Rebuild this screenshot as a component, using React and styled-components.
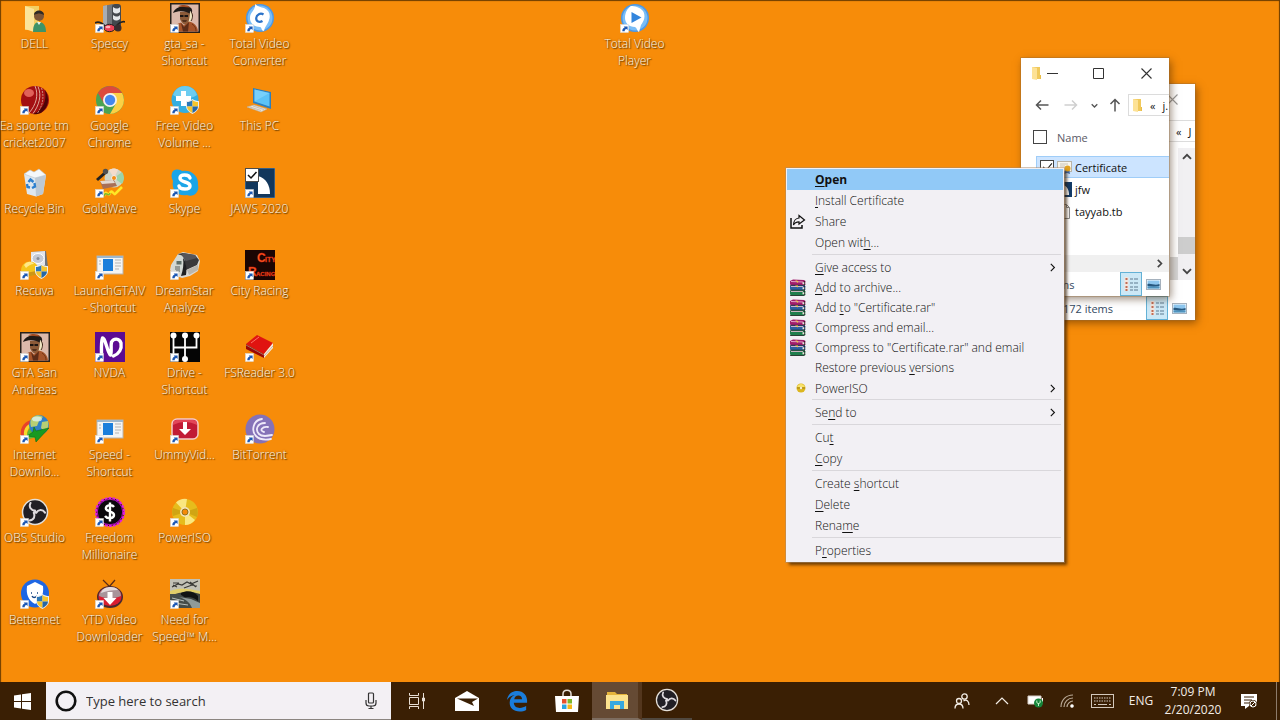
import React from 'react';
import styled, { createGlobalStyle } from 'styled-components';

const GlobalStyle = createGlobalStyle`
  *, *::before, *::after { box-sizing: border-box; }
  body {
    margin: 0;
    font-family: "Open Sans", "Noto Sans", "Liberation Sans", sans-serif;
    font-size: 12px;
    color: #111;
  }
  button, input { font: inherit; color: inherit; }
  button { border: 0; background: none; padding: 0; }
  ul { list-style: none; margin: 0; padding: 0; }
  svg { display: block; flex: none; }
`;

/* ---------- layout ---------- */

const Screen = styled.div`
  display: flex;
  flex-direction: column;
  min-height: 100vh;
  background: #f78c09;
`;

const Desktop = styled.main`
  position: relative;
  flex: 1;
  display: flex;
  padding-bottom: 24px;
  overflow: hidden;
  box-shadow: inset 2px 2px 1px -1px #6b3b00, inset -2px 0 1px -1px #6b3b00;
`;

const IconGrid = styled.div`
  display: grid;
  grid-auto-flow: column;
  grid-template-rows: repeat(8, 1fr);
  grid-auto-columns: 75px;
  padding-left: ${(p) => p.$indent || 0}px;
  margin-left: -3px;
`;

const Shortcut = styled.button`
  display: flex;
  flex-direction: column;
  align-items: center;
  justify-content: flex-start;
  gap: 2px;
  padding-top: 3px;
`;

const ShortcutLabel = styled.span`
  width: 78px;
  margin: 0 -2px;
  font-size: 12px;
  font-weight: 300;
  line-height: 17px;
  color: #fff8e8;
  text-align: center;
  white-space: pre-line;
  text-shadow: 1px 1px 1px #5c3500, 0 0 2px #8f5200;
`;

/* ---------- icon building blocks ---------- */

function Tile({ children, link = true, label }) {
  return (
    <svg width="30" height="30" viewBox="0 0 30 30" role="img" aria-label={label}>
      {children}
      {link && (
        <g>
          <rect x="0.5" y="21.5" width="8" height="8" fill="#fff" stroke="#d9d9d9" strokeWidth="0.5" />
          <path d="M2.3 28.3c0-2.2.9-3.4 2.4-3.7l-1-1.2h3.9v3.7l-1.1-1.1c-1.4.3-1.8 1.1-1.8 2.3z" fill="#1c58b4" />
        </g>
      )}
    </svg>
  );
}

function Shield({ x = 16, y = 14 }) {
  return (
    <g transform={`translate(${x} ${y})`}>
      <path d="M6.5 0C8.5 1.6 11 2 13 2v5c0 3.600-3 6-6.500 8C3 13 0 10.600 0 7V2c2 0 4.500-.4 6.500-2z" fill="#e9eef2" />
      <path d="M6.500 1v6.500H1V3c2 0 4-.6 5.500-2z" fill="#2c78b8" />
      <path d="M6.500 1v6.500H12V3c-2 0-4-.6-5.500-2z" fill="#f5c52c" />
      <path d="M1 7.500h5.500V14C3.500 12.400 1 10.500 1 7.500z" fill="#f5c52c" />
      <path d="M12 7.500H6.500V14C9.500 12.400 12 10.500 12 7.500z" fill="#2666a4" />
    </g>
  );
}

function ObsMark({ r = 13, cx = 15, cy = 15 }) {
  const s = r / 13;
  return (
    <g transform={`translate(${cx} ${cy}) scale(${s})`}>
      <circle r="12.500" fill="#211f25" stroke="#e4dfd8" strokeWidth="1.500" />
      {[0, 120, 240].map((a) => (
        <path key={a} d="M-4.500 -9C-6.500 -5 -4 -1.500 0 -1.500" transform={`rotate(${a})`} fill="none" stroke="#dedade" strokeWidth="2" strokeLinecap="round" />
      ))}
      <circle r="1.800" fill="#dedade" />
    </g>
  );
}

const art = {
  user: (
    <>
      <path d="M5 3h14v24H5z" fill="#f3cf63" />
      <path d="M5 3l9 3v23l-9-3z" fill="#fbe49a" />
      <circle cx="19" cy="13" r="5" fill="#7d5537" />
      <path d="M14 12c0-6 10-6 10 0-3-2-6-2-10 0z" fill="#2f2a26" />
      <path d="M13 29c0-8 3-10 6-10s7 2 7 10z" fill="#3e9468" />
      <path d="M17 19l2 3 2-3z" fill="#e9f4ec" />
    </>
  ),
  speccy: (
    <>
      <path d="M8 3l10-2v24l-10 1z" fill="#72767b" />
      <path d="M8 3l4-1v24l-4-1z" fill="#a9adb2" />
      <rect x="17" y="1" width="9" height="26" rx="3" fill="#44484d" />
      <path d="M18 4c3 2 5 2 7 0v5c-3 2-5 2-7 0zM18 12c3 2 5 2 7 0v4c-3 2-5 2-7 0z" fill="#e4e7ea" />
      <path d="M0 20c3-2 6-1 10 3M30 19c-3-1-5 0-8 3" stroke="#222" strokeWidth="1.700" fill="none" />
      <ellipse cx="14.500" cy="25" rx="5.500" ry="3.700" fill="#ee4257" stroke="#1e1e1e" />
      <ellipse cx="13" cy="24" rx="2.500" ry="1.200" fill="#ffb1b8" />
      <ellipse cx="23" cy="25" rx="3.500" ry="3.500" fill="#3a2c2e" />
    </>
  ),
  gta: (
    <>
      <rect width="30" height="30" fill="#28201a" />
      <rect x="1.500" y="1.500" width="27" height="27" fill="#dcb9ab" />
      <path d="M10 9h10v8c-1 4-2 5-4 5s-5-3-6-6z" fill="#8b5a38" />
      <path d="M3 10C5 3 18 1 21 5c2 2 1 5 0 6-5-3-12-4-18-1z" fill="#211a17" />
      <path d="M8 3.500c4-2 10-2 12 1-4 0-8-1-12-1z" fill="#a34a20" />
      <path d="M10 12h3.500v2H10zM14.500 12H18v2h-3.500z" fill="#1c1512" />
      <path d="M20 8c3 2 3 6 2 9l-4 4c1-4 2-8 2-13z" fill="#efe5c2" />
      <path d="M21 9c2 2 2 6 0 9" stroke="#3b2417" fill="none" />
      <path d="M2 28.500c1-6 6-8 9-9l3 3 5-4c5 1 9 5 9 10z" fill="#a6542a" />
      <path d="M11 20l3 4 5-5-1 9.500h-5z" fill="#5c2c17" />
      <path d="M12 17h5l-1 2h-3z" fill="#54301c" />
      <path d="M22 21c3 2 4 4 4 7.500M6 22c2 2 2 4 2 6" stroke="#763515" fill="none" />
    </>
  ),
  converter: (
    <>
      <circle cx="15" cy="15" r="14" fill="#4b98e6" />
      <circle cx="15" cy="15" r="12.500" fill="#79bdf7" />
      <path d="M10 1c3 3 6 3 9 4 5 2 7 7 5 12-1 4-4 6-5 11-3 0-2-4-4-4-6 0-10-4-10-9 0-6 6-8 5-14z" fill="#fff" />
      <path d="M18.500 11.500c-3-2-7 0-7.300 3.500-.2 3.500 3 5 6.300 3" stroke="#2b72c8" strokeWidth="2.200" fill="none" />
    </>
  ),
  player: (
    <>
      <circle cx="15" cy="15" r="14" fill="#4b98e6" />
      <circle cx="15" cy="15" r="12.500" fill="#79bdf7" />
      <path d="M11 3c3 0 9 1 12 5 3 5 1 10-2 14l-2 7c-2-1-2-4-4-5-6 0-10-4-10-9 0-6 3-10 6-12z" fill="#fff" />
      <path d="M11.500 9l10 5.500-10 5.500z" fill="#3285dd" />
    </>
  ),
  cricket: (
    <>
      <circle cx="15" cy="15" r="14" fill="#a30f12" />
      <ellipse cx="9" cy="8" rx="5" ry="4" fill="#e0625a" />
      <path d="M25 5c5 8 4 17-4 23-5 2-8 1-8 1 10-4 14-13 12-24z" fill="#4c0507" />
      <path d="M15 1c4 9 1 19-6 27M18 1.500c4 9 1 19-5 27" stroke="#e0a99b" strokeWidth="1" fill="none" />
      <path d="M21.500 3c3 9 1 18-4 25" stroke="#c98d80" strokeWidth="1" fill="none" strokeDasharray="2 1" />
    </>
  ),
  chrome: (
    <>
      <circle cx="15" cy="15" r="14" fill="#4aa453" />
      <path d="M15 15L2.900 8A14 14 0 0 1 27.100 8z" fill="#dc4a3d" />
      <path d="M15 8h12.100A14 14 0 0 1 15 29l6-10.500z" fill="#fbd045" />
      <path d="M2.900 8L9 18.500 15 8z" fill="#dc4a3d" />
      <circle cx="15" cy="15" r="7" fill="#f4f1ee" />
      <circle cx="15" cy="15" r="5.200" fill="#4488ee" />
    </>
  ),
  volume: (
    <>
      <circle cx="15" cy="14.500" r="13.500" fill="#35aee0" />
      <path d="M3 10c4-12 20-12 24 0-8 5-16 5-24 0z" fill="#6cccf0" />
      <path d="M11 6h5v5h5v5h-5v5h-5v-5H6v-5h5z" fill="#fff" />
      <Shield x={16} y={14} />
    </>
  ),
  pc: (
    <>
      <path d="M8 3l18 4v17L8 18z" fill="#2d7fbd" />
      <path d="M9.500 4.500l15 3.500v13.500l-15-5z" fill="#5cc3f7" />
      <path d="M9.500 4.500l15 3.500-15 8.500z" fill="#8ad8fc" opacity=".6" />
      <path d="M2 22l7-2 13 4-6 3z" fill="#e8e3da" stroke="#b7b0a3" strokeWidth=".6" />
      <path d="M5 22l11 3.500M8 21l11 3.500" stroke="#b7b0a3" strokeWidth=".7" />
    </>
  ),
  bin: (
    <>
      <path d="M4 6l22 1-3 19-7 2.500L7 26z" fill="#dfe7ee" />
      <path d="M15 8l11-1-3 19-7 2.500z" fill="#bdc9d4" />
      <path d="M4 6l6-4 4 2 5-3 7 6-11 3z" fill="#f5f8fa" stroke="#b9c4ce" strokeWidth=".6" />
      <path d="M8.500 14l2-2.500 3 2.500M14.500 15l.5 3.500-3 1.500M10 19.500l-2.500-.5-.5-3" fill="none" stroke="#2c80cf" strokeWidth="2.400" />
    </>
  ),
  goldwave: (
    <>
      <circle cx="19" cy="10" r="9.500" fill="#cfd6c8" />
      <path d="M19 10L27 4c3 4 2 9 0 12z" fill="#9bd3a9" />
      <path d="M19 10L14 2c3-2 7-2 9 0z" fill="#f3dccb" />
      <circle cx="19" cy="10" r="2.500" fill="#f58d14" stroke="#eee" />
      <path d="M1 11l9-8 2 2-9 8z" fill="#222" />
      <circle cx="10.500" cy="3.500" r="2.700" fill="#51514f" />
      <path d="M5 13l14-1 3 6-14 3z" fill="#a86f57" />
      <path d="M5 13l13-1 2 3-13 1z" fill="#e4d9d1" />
      <path d="M9 28c2-8 4 2 6-3s4 4 6 0l6-6" stroke="#ffe626" strokeWidth="2.600" fill="none" />
      <path d="M9 28c2-6 4 2 6-3" stroke="#79b830" strokeWidth="1.500" fill="none" />
    </>
  ),
  skype: (
    <>
      <path d="M3 3c4-3 8-1 9 0 9-2 17 5 16 14 2 7-5 13-11 10C8 29 1 22 3 13c-2-4-2-7 0-10z" fill="#1ba5e8" />
      <path d="M20 10c-1-4-10-4-10 0 0 5 10 3 10 8 0 4-10 4-11 0" fill="none" stroke="#fff" strokeWidth="3.400" strokeLinecap="round" />
    </>
  ),
  jaws: (
    <>
      <rect width="30" height="30" fill="#12375c" stroke="#5d86aa" />
      <path d="M13 8c8 2 12 9 12 18H13z" fill="#fff" />
      <rect x=".5" y=".5" width="13" height="13" fill="#fff" stroke="#4b4b4b" />
      <path d="M3 7l3 3 5.500-6" fill="none" stroke="#111" strokeWidth="1.500" />
    </>
  ),
  recuva: (
    <>
      <path d="M11 2l15-1 2 16-16 3z" fill="#6f747c" />
      <path d="M11 2l14-1v14l-14 4z" fill="#e1e4ec" />
      <ellipse cx="18" cy="8.500" rx="6" ry="5" fill="#c5cad6" stroke="#fff" />
      <circle cx="18" cy="8.500" r="1.500" fill="#888d98" />
      <path d="M1 21c0-9 9-12 15-7 3 3 3 6 3 9L8 27H2z" fill="#f5c51c" />
      <path d="M4 15c3-4 8-4 10-1-3 0-6 2-8 4z" fill="#ffe887" />
      <path d="M3 23c6 0 10-2 16-2v3l-12 3z" fill="#cd9614" />
      <Shield x={15} y={14} />
    </>
  ),
  app: (
    <>
      <rect x="2" y="6" width="26" height="18" fill="#f4f4f3" stroke="#b8b4ae" />
      <rect x="2" y="6" width="26" height="2" fill="#9eb7cc" />
      <rect x="8" y="9" width="10" height="12" fill="#1b7edb" />
      <path d="M20 10h6M20 13h6M20 16h6M20 19h4M4 11h2M4 14h2" stroke="#b3b3b3" />
    </>
  ),
  dreamstar: (
    <>
      <path d="M1 15L8 4l5-2 14 3 3 6-2 10-8 5-8 2-8-3-4-5z" fill="#dcdad4" />
      <path d="M8 4l5-1 12 2 4 5-2 5-11 5-4-12z" fill="#3a393a" />
      <path d="M13 3l12 2 2 3-11 3-5-5z" fill="#56565a" />
      <path d="M2 14L8 5c4-1 6 3 7 7l1 11-5 2-8-5z" fill="#d4d9d3" />
      <path d="M13 8c3 4 4 10 3 17l-5 1c2-6 3-12 2-18z" fill="#1f2022" />
      <rect x="6.500" y="11" width="5" height="3.500" fill="#5f6f68" />
      <path d="M5 17h5M5 19h5M6 21h4" stroke="#565d5a" />
      <path d="M17 20l11-5v5l-9 5z" fill="#b9b6ae" />
    </>
  ),
  city: (
    <>
      <rect width="30" height="30" fill="#1b0503" />
      <g fill="#ff5a24" stroke="#c81707" strokeWidth=".3" fontFamily="Liberation Sans" fontWeight="700">
        <text x="12" y="12" fontSize="12">C</text>
        <text x="20" y="12" fontSize="7">ITY</text>
        <text x="3" y="26" fontSize="12">R</text>
        <text x="11" y="26" fontSize="6">ACING</text>
      </g>
    </>
  ),
  nvda: (
    <>
      <rect width="30" height="30" fill="#5c0b93" />
      <path d="M6.500 23C6.500 17 6 10 7.500 6c3 0 5 15 8 17 1.500-3 0-9 1-13 2-4 8-4 9.500 1 1 6-2 11-7.500 13" fill="none" stroke="#fff" strokeWidth="3.400" strokeLinecap="round" strokeLinejoin="round" />
    </>
  ),
  drive: (
    <>
      <rect width="30" height="30" fill="#050505" />
      <path d="M3.500 4v12M15 4v22M26.500 4v11.500H3.500V22" fill="none" stroke="#fff" strokeWidth="1.800" />
      <g fill="#fff"><circle cx="3.500" cy="3.500" r="3" /><circle cx="15" cy="3.500" r="3" /><circle cx="26.500" cy="3.500" r="3" /><circle cx="15" cy="27" r="3" /></g>
    </>
  ),
  book: (
    <>
      <path d="M1 12L12 3l16 8-9 11z" fill="#e01310" />
      <path d="M1 12l18 10v4L1 17z" fill="#9a0705" />
      <path d="M19 22l9-11v5l-9 10z" fill="#f5ebdf" />
      <path d="M19 24l9-10M1 13l18 10" stroke="#b19a8b" strokeWidth=".7" />
      <path d="M6 11l8-6" stroke="#ff7267" />
    </>
  ),
  idm: (
    <>
      <path d="M1 22C-1 11 8 5 17 5l-3 5C7 10 4 14 4 22z" fill="#e8412b" />
      <path d="M4 22C3 14 8 9 14 9v3c-6 0-7 5-7 10z" fill="#f7d929" />
      <path d="M7 22c0-6 3-9 8-9l2 10-8 2z" fill="#5dbb35" />
      <circle cx="19" cy="11" r="10" fill="#2f7fc6" />
      <path d="M12 4c4-4 8-3 11-1l-4 4-2 5-6 1c-1-4-1-7 1-9zM22 8l6-1c1 4 0 8-3 11l-4-4z" fill="#b6cf74" />
      <ellipse cx="17" cy="5" rx="5" ry="2.500" fill="#e5f6ff" opacity=".7" />
      <path d="M14 13l2 4 13-3-13 14-1-5-8-1 6-4z" fill="#189a21" stroke="#0c6e13" strokeWidth=".6" />
    </>
  ),
  ummy: (
    <>
      <rect x="2" y="5" width="26" height="20" rx="5" fill="#c11b35" stroke="#f5cbc8" strokeWidth="1.500" />
      <path d="M3 11c8-4 16-4 24 0V9c0-2-2-3-4-3H7C5 6 3 7 3 9z" fill="#e24758" />
      <path d="M13 8h4v7h4l-6 6-6-6h4z" fill="#fff" />
    </>
  ),
  bittorrent: (
    <>
      <circle cx="15" cy="15" r="14.500" fill="#8572b8" />
      <path d="M17 5C8 6 6 17 11 22c4 4 10 4 15 3M20 9c-8 0-10 7-6 11 3 3 8 2 13 1M23 13c-6-1-9 4-4 5" fill="none" stroke="#eee9fa" strokeWidth="1.800" strokeLinecap="round" />
    </>
  ),
  obs: <ObsMark />,
  freedom: (
    <>
      <circle cx="15" cy="15" r="14" fill="#0c080c" stroke="#df1de2" strokeWidth="2" strokeDasharray="3 1" />
      <circle cx="15" cy="15" r="12.700" fill="none" stroke="#b313ba" />
      <path d="M19 10c-2-3-9-2-8 2 1 3 8 2 8 6 0 4-7 4-9 1M15 5.500v19" fill="none" stroke="#fff" strokeWidth="2.400" />
    </>
  ),
  disc: (
    <>
      <circle cx="15" cy="15" r="13" fill="#e6bc1c" />
      <path d="M15 15L6 5.500A13 13 0 0 1 17 2zM15 15l10 8a13 13 0 0 1-10 5z" fill="#fff19a" opacity=".8" />
      <path d="M15 15l12-4c1 3 1 6 0 9zM15 15L3 19c-1-3-1-6 0-8z" fill="#b98e0a" opacity=".5" />
      <circle cx="15" cy="15" r="5" fill="#f3e2b5" />
      <circle cx="15" cy="15" r="3" fill="#f58a08" stroke="#93711b" />
    </>
  ),
  betternet: (
    <>
      <circle cx="15" cy="14.500" r="14" fill="#1d66e4" />
      <path d="M7 7l8-4 8 4c1 9-2 14-8 18C8 21 6 15 7 7z" fill="#fff" />
      <path d="M11 14h1M17 14h1M12 17c1 2 3 2 5 0" stroke="#164484" strokeWidth="1.300" fill="none" />
      <Shield x={16} y={15} />
    </>
  ),
  ytd: (
    <>
      <path d="M8 1l7 7M20 1l-6 7" stroke="#5b2b18" strokeWidth="1.200" />
      <ellipse cx="15" cy="18" rx="13" ry="11" fill="#4a2a30" />
      <ellipse cx="15" cy="17.500" rx="11.500" ry="9.500" fill="#d91d31" />
      <path d="M4 17c0-11 22-13 22 0-7 3-15 3-22 0z" fill="#a8949a" />
      <path d="M6 14c1-7 14-8 17-3-6 0-12 1-17 3z" fill="#e3d9dc" />
      <path d="M12.500 13h5v6h4L15 26l-6.500-7h4z" fill="#fff" />
    </>
  ),
  nfs: (
    <>
      <rect width="30" height="29" fill="#3d433f" />
      <rect width="30" height="12" fill="#c2c1b5" />
      <path d="M2 8l6-3 4 1 5-3 4 2 7-3M3 4h6M14 9l8-3 5 1M3 6l4 2M20 3l6 5" stroke="#393935" strokeWidth="1.200" fill="none" />
      <path d="M0 12c10-4 20-2 30 0v3c-8-3-20-3-30 2z" fill="#e0ce69" />
      <path d="M11 14c6-3 13-2 17 3v5c-5-5-13-5-17-2z" fill="#111413" />
      <path d="M0 15l9 0c4 2 8 4 11 9l3 5H0z" fill="#454d49" />
      <path d="M9 18c6 2 11 5 13 11h8v-5l-9-4z" fill="#8f9b99" />
      <path d="M2 19l12 3M4 24l14 2" stroke="#b9c1bc" strokeWidth="1" />
    </>
  ),
};

const shortcuts = [
  { icon: 'user', text: 'DELL', plain: true },
  { icon: 'cricket', text: 'Ea sporte tm\ncricket2007' },
  { icon: 'bin', text: 'Recycle Bin', plain: true },
  { icon: 'recuva', text: 'Recuva' },
  { icon: 'gta', text: 'GTA San\nAndreas' },
  { icon: 'idm', text: 'Internet\nDownlo...' },
  { icon: 'obs', text: 'OBS Studio' },
  { icon: 'betternet', text: 'Betternet' },
  { icon: 'speccy', text: 'Speccy' },
  { icon: 'chrome', text: 'Google\nChrome' },
  { icon: 'goldwave', text: 'GoldWave' },
  { icon: 'app', text: 'LaunchGTAIV\n- Shortcut' },
  { icon: 'nvda', text: 'NVDA' },
  { icon: 'app', text: 'Speed -\nShortcut' },
  { icon: 'freedom', text: 'Freedom\nMillionaire' },
  { icon: 'ytd', text: 'YTD Video\nDownloader' },
  { icon: 'gta', text: 'gta_sa -\nShortcut' },
  { icon: 'volume', text: 'Free Video\nVolume ...' },
  { icon: 'skype', text: 'Skype' },
  { icon: 'dreamstar', text: 'DreamStar\nAnalyze' },
  { icon: 'drive', text: 'Drive -\nShortcut' },
  { icon: 'ummy', text: 'UmmyVid...' },
  { icon: 'disc', text: 'PowerISO' },
  { icon: 'nfs', text: 'Need for\nSpeed™ M...' },
  { icon: 'converter', text: 'Total Video\nConverter' },
  { icon: 'pc', text: 'This PC', plain: true },
  { icon: 'jaws', text: 'JAWS 2020' },
  { icon: 'city', text: 'City Racing' },
  { icon: 'book', text: 'FSReader 3.0' },
  { icon: 'bittorrent', text: 'BitTorrent' },
];

function DesktopShortcut({ icon, text, plain }) {
  return (
    <Shortcut type="button">
      <Tile link={!plain}>{art[icon]}</Tile>
      <ShortcutLabel>{text}</ShortcutLabel>
    </Shortcut>
  );
}

/* ---------- explorer windows ---------- */

const Window = styled.section`
  position: absolute;
  left: ${(p) => p.$x}px;
  top: ${(p) => p.$y}px;
  width: 148px;
  background: #fff;
  font-size: 11px;
  overflow: hidden;
  box-shadow: 0 0 0 1px rgba(150, 110, 60, 0.35), 2px 3px 8px rgba(60, 30, 0, 0.5);
`;

const TitleBar = styled.header`
  display: flex;
  align-items: center;
  height: 30px;
  padding-left: 10px;
`;

const CaptionButton = styled.button`
  display: flex;
  align-items: center;
  justify-content: center;
  flex: none;
  width: ${(p) => p.$w}px;
  height: 30px;
  color: ${(p) => (p.$dim ? '#999' : '#333')};
`;

const NavBar = styled.nav`
  display: flex;
  align-items: center;
  height: 34px;
  padding-left: 8px;
`;

const NavButton = styled.button`
  display: flex;
  align-items: center;
  justify-content: center;
  flex: none;
  width: ${(p) => p.$w}px;
  height: 22px;
  color: ${(p) => (p.$dim ? '#cfcfcf' : '#555')};
`;

const Address = styled.div`
  display: flex;
  align-items: center;
  gap: 7px;
  flex: none;
  width: 70px;
  height: 22px;
  padding-left: 3px;
  border: 1px solid #dcdcdc;
`;

const Body = styled.div`
  display: flex;
  flex-direction: ${(p) => (p.$row ? 'row' : 'column')};
  justify-content: ${(p) => (p.$row ? 'flex-end' : 'flex-start')};
  min-height: ${(p) => p.$h}px;
`;

const ColumnHead = styled.div`
  display: flex;
  align-items: center;
  gap: 10px;
  height: 30px;
  margin-bottom: 4px;
  padding-left: 12px;
  color: #5a5a66;
`;

const Check = styled.input`
  appearance: none;
  display: flex;
  justify-content: center;
  flex: none;
  width: 14px;
  height: 14px;
  margin: 0;
  border: 1px solid #444;
  background: #fff;

  &:checked::after {
    content: '';
    width: 5px;
    height: 9px;
    border: solid #111;
    border-width: 0 1px 1px 0;
    transform: rotate(40deg);
  }
`;

const FileRow = styled.li`
  display: flex;
  align-items: center;
  gap: 3px;
  height: 22px;
  margin-left: 15px;
  padding-left: 3px;
  background: ${(p) => (p.$selected ? '#cce4ff' : 'transparent')};
  border: 1px solid ${(p) => (p.$selected ? '#9fcdf8' : 'transparent')};
  border-right: 0;
`;

const RowCheck = styled(Check)`
  visibility: ${(p) => (p.$show ? 'visible' : 'hidden')};
`;

const HScroll = styled.div`
  display: flex;
  align-items: center;
  justify-content: flex-end;
  height: 17px;
  margin-top: auto;
  padding-right: 5px;
  background: #f0f0f0;
  color: #444;
`;

const VScroll = styled.div`
  display: flex;
  flex-direction: column;
  justify-content: space-between;
  align-items: center;
  width: 17px;
  height: 132px;
  padding: 4px 0;
  background: #f1f0f2;
  color: #444;
`;

const VThumb = styled.div`
  width: 17px;
  height: 17px;
  margin: auto 0 12px;
  background: #cdcdcd;
`;

const PaneEdge = styled.div`
  align-self: flex-start;
  width: 8px;
  height: 23px;
  margin-top: 109px;
  background: #d6d6d6;
`;

const StatusBar = styled.footer`
  display: flex;
  align-items: center;
  height: 24px;
  padding: 0 5px 0 16px;
  color: #33495f;
`;

const ViewButton = styled.button`
  display: flex;
  align-items: center;
  justify-content: center;
  width: 22px;
  height: 24px;
  margin-left: ${(p) => (p.$first ? 'auto' : 0)};
  background: ${(p) => (p.$on ? '#cce8f6' : 'none')};
  border: 1px solid ${(p) => (p.$on ? '#63b1d6' : 'transparent')};
`;

function FolderGlyph() {
  return (
    <svg width="11" height="14" viewBox="0 0 11 14">
      <path d="M1 1h8v12H1z" fill="#f0c95c" />
      <path d="M1 1l5 1v12l-5-1z" fill="#fde296" />
      <path d="M9 9h1v4H9z" fill="#e9bd48" />
    </svg>
  );
}

function Chevron({ dir = 'right', size = 8, w = 1.5 }) {
  const angle = { right: 0, down: 90, left: 180, up: 270 }[dir];
  return (
    <svg width={size} height={size} viewBox="0 0 8 8">
      <path d="M2.500 .8L5.700 4 2.500 7.200" transform={`rotate(${angle} 4 4)`} fill="none" stroke="currentColor" strokeWidth={w} />
    </svg>
  );
}

function Arrow({ dir }) {
  const angle = { left: 0, up: 90, right: 180 }[dir];
  return (
    <svg width="14" height="14" viewBox="0 0 14 14">
      <path d="M13.500 7H1.500M6 2.500L1.500 7 6 11.500" transform={`rotate(${angle} 7 7)`} fill="none" stroke="currentColor" strokeWidth="1.500" />
    </svg>
  );
}

function WindowTop({ path, dim }) {
  return (
    <>
      <TitleBar>
        <FolderGlyph />
        <CaptionButton $w={21} aria-label="Minimize" type="button">
          <svg width="11" height="11" viewBox="0 0 11 11"><path d="M0 5.500h11" stroke="currentColor" /></svg>
        </CaptionButton>
        <CaptionButton $w={71} aria-label="Maximize" type="button">
          <svg width="11" height="11" viewBox="0 0 11 11"><path d="M.5 .5h10v10H.5z" fill="none" stroke="currentColor" /></svg>
        </CaptionButton>
        <CaptionButton $w={24} $dim={dim} aria-label="Close" type="button">
          <svg width="11" height="11" viewBox="0 0 11 11"><path d="M.5 .5l10 10M10.500 .5l-10 10" stroke="currentColor" strokeWidth="1.100" /></svg>
        </CaptionButton>
      </TitleBar>
      <NavBar>
        <NavButton $w={25} aria-label="Back" type="button"><Arrow dir="left" /></NavButton>
        <NavButton $w={34} $dim aria-label="Forward" type="button"><Arrow dir="right" /></NavButton>
        <NavButton $w={13} aria-label="Recent locations" type="button"><Chevron dir="down" size={7} /></NavButton>
        <NavButton $w={27} aria-label="Up" type="button"><Arrow dir="up" /></NavButton>
        <Address>
          <FolderGlyph />
          <span>«</span>
          <span>{path}</span>
        </Address>
      </NavBar>
    </>
  );
}

function WindowStatus({ text }) {
  return (
    <StatusBar>
      <span>{text}</span>
      <ViewButton $first $on aria-label="Details view" type="button">
        <svg width="16" height="16" viewBox="0 0 16 16">
          <path d="M3.500 1v14" stroke="#f4e5dc" strokeWidth="4" />
          <path d="M3.500 2v2M3.500 6v2M3.500 10v2M3.500 13v2" stroke="#c06d56" strokeWidth="2" />
          <path d="M7 3h3M11 3h4M7 7h3M11 7h4M7 11h3M11 11h4M7 14h3M11 14h4" stroke="#5f7b90" />
        </svg>
      </ViewButton>
      <ViewButton aria-label="Thumbnail view" type="button">
        <svg width="15" height="11" viewBox="0 0 15 11">
          <rect x=".5" y=".5" width="14" height="10" fill="#fff" stroke="#a5b1bd" />
          <rect x="1.500" y="1.500" width="12" height="8" fill="#8dc6ee" />
          <path d="M1.500 5c4-1 7 2 12 0v2c-4 1-8 1-12 0z" fill="#27587f" />
          <path d="M1.500 7.500h12v2h-12z" fill="#4f93bd" />
        </svg>
      </ViewButton>
    </StatusBar>
  );
}

const fileIcons = {
  cert: (
    <svg width="15" height="14" viewBox="0 0 15 14">
      <rect x=".5" y="1.500" width="14" height="10" fill="#f8f5ec" stroke="#b9b4a8" />
      <path d="M3 4h8M3 6h5" stroke="#c9c4b8" />
      <path d="M8 9l-1 5 3-1 3 1-1-5z" fill="#3b66a8" />
      <circle cx="10.500" cy="8.500" r="3" fill="#e2a321" />
    </svg>
  ),
  jaws: (
    <svg width="15" height="15" viewBox="0 0 15 15">
      <rect width="15" height="15" fill="#123a66" />
      <path d="M6 3c4 1 6 5 6 10H6z" fill="#fff" />
    </svg>
  ),
  page: (
    <svg width="15" height="15" viewBox="0 0 15 15">
      <path d="M2.500 .5h7l3 3v11h-10zM9.500 .5v3h3" fill="#fff" stroke="#888" />
    </svg>
  ),
};

const files = [
  { name: 'Certificate', icon: 'cert', selected: true },
  { name: 'jfw', icon: 'jaws' },
  { name: 'tayyab.tb', icon: 'page' },
];

/* ---------- context menu ---------- */

const Menu = styled.div`
  position: absolute;
  left: 786px;
  top: 168px;
  width: 278px;
  padding: 1px;
  background: #f2f0f4;
  box-shadow: 0 0 0 1px rgba(170, 140, 110, 0.5), 3px 3px 3px rgba(50, 25, 0, 0.7);
`;

const MenuItem = styled.button`
  display: grid;
  grid-template-columns: 22px 1fr 8px;
  align-items: center;
  column-gap: 4px;
  width: 100%;
  height: ${(p) => (p.$compact ? 20 : 21)}px;
  padding: 0 7px 0 2px;
  text-align: left;
  color: #111;
  font-weight: ${(p) => (p.$active ? 700 : 300)};
  background: ${(p) => (p.$active ? '#91c9f7' : 'transparent')};

  u { text-underline-offset: 2px; }
`;

const MenuIcon = styled.span`
  display: flex;
  justify-content: ${(p) => (p.$end ? 'flex-end' : 'flex-start')};
  padding-right: 5px;
`;

const MenuLine = styled.hr`
  height: 1px;
  margin: 1px 2px 2px 25px;
  border: 0;
  background: #d9d7db;
`;

function ShareGlyph() {
  return (
    <svg width="17" height="16" viewBox="0 0 17 16">
      <path d="M2 4v10h11v-3" fill="none" stroke="#111" strokeWidth="1.500" />
      <path d="M10 1.500l5.500 4.500L10 10V7.800C7.500 7.800 5.500 8.800 4.500 11 4.500 7 7 4.300 10 4z" fill="none" stroke="#111" strokeWidth="1.200" />
    </svg>
  );
}

function ArchiveGlyph() {
  return (
    <svg width="17" height="17" viewBox="0 0 17 17">
      <path d="M1 2l3-1.500L15 1l1.500 1v4L14 6.500H2L1 5z" fill="#a21e6c" />
      <path d="M1 7l2-.8h12l1.500 1v3.600L14 11.500H2L1 10z" fill="#2e5f9e" />
      <path d="M1 12l2-.8h12l1.500 1V16l-2 .7H2L1 15z" fill="#1f7d4c" />
      <path d="M2 2.500l12 .5M2 7.500h12M2 12.500h12" stroke="#f4c3dc" strokeWidth=".8" />
      <path d="M13.500 3.300h3v2h-3zM13.500 8.300h3v2h-3zM13.500 13.300h3v2h-3z" fill="#e9e6dc" />
      <path d="M1 6.300h14M1 11.200h14M1 16.500h14M15.500 2v14.500" stroke="#1a1a1a" strokeWidth=".7" />
      <path d="M6 1l3 3v-2zM6 6.500h3v2" fill="#efcb49" />
    </svg>
  );
}

function DiscGlyph() {
  return (
    <svg width="10" height="10" viewBox="0 0 10 10">
      <circle cx="5" cy="5" r="4.500" fill="#dcb61f" />
      <path d="M1 4c2-4 6-4 8 0z" fill="#f8e26a" />
      <path d="M1 5h8" stroke="#a17e12" />
      <circle cx="5" cy="5" r="1.200" fill="#f6ecce" />
    </svg>
  );
}

const menu = [
  { label: '&Open', active: true },
  { label: '&Install Certificate' },
  { label: 'Share', icon: 'share' },
  { label: 'Open wit&h...' },
  null,
  { label: '&Give access to', more: true, compact: true },
  { label: '&Add to archive...', icon: 'rar', compact: true },
  { label: 'Add &to "Certificate.rar"', icon: 'rar', compact: true },
  { label: 'Compress and email...', icon: 'rar', compact: true },
  { label: 'Compress to "Certificate.rar" and email', icon: 'rar', compact: true },
  { label: 'Restore previous &versions' },
  { label: 'PowerISO', icon: 'disc', more: true, compact: true },
  null,
  { label: 'Se&nd to', more: true },
  null,
  { label: 'Cu&t' },
  { label: '&Copy' },
  null,
  { label: 'Create &shortcut' },
  { label: '&Delete' },
  { label: 'Rena&me' },
  null,
  { label: 'P&roperties' },
];

const menuGlyphs = { share: <ShareGlyph />, rar: <ArchiveGlyph />, disc: <DiscGlyph /> };

function AccessLabel({ text }) {
  const at = text.indexOf('&');
  if (at < 0) return <span>{text}</span>;
  return (
    <span>
      {text.slice(0, at)}
      <u>{text[at + 1]}</u>
      {text.slice(at + 2)}
    </span>
  );
}

/* ---------- taskbar ---------- */

const Taskbar = styled.footer`
  display: flex;
  align-items: stretch;
  height: 38px;
  background: #3a1f04;
  color: #f3ede6;
`;

const StartButton = styled.button`
  display: flex;
  align-items: center;
  justify-content: center;
  width: 46px;
  padding-right: 2px;
`;

const Search = styled.label`
  display: flex;
  align-items: center;
  gap: 9px;
  width: 345px;
  margin-right: 1px;
  padding: 0 14px 0 9px;
  background: #f3f0f4;
  border-bottom: 1px solid #8b8580;
  color: #222;
`;

const SearchInput = styled.input`
  flex: 1;
  min-width: 0;
  padding: 0;
  border: 0;
  outline: 0;
  background: none;
  font-size: 13px;
  line-height: 20px;
  &::placeholder { color: #333; opacity: 1; }
`;

const TaskButton = styled.button`
  display: flex;
  align-items: center;
  justify-content: center;
  width: 50px;
  ${(p) => p.$active && 'background: #654a34; border-right: 4px solid #53361d; border-bottom: 2px solid #7d6d60; padding-left: 4px;'}
  ${(p) => p.$open && 'border-bottom: 2px solid #50483f;'}
`;

const Tray = styled.div`
  display: flex;
  align-items: stretch;
  margin-left: auto;
`;

const TrayButton = styled.button`
  display: flex;
  align-items: center;
  justify-content: center;
  width: ${(p) => p.$w}px;
  font-size: 12px;
  line-height: 18px;
  white-space: nowrap;
`;

const ShowDesktop = styled.button`
  width: 4px;
  border-left: 1px solid #8d7b6b;
`;

export default function App() {
  return (
    <Screen>
      <GlobalStyle />
      <Desktop>
        <IconGrid>
          {shortcuts.map((s) => <DesktopShortcut key={s.text} {...s} />)}
        </IconGrid>
        <IconGrid $indent={303}>
          <DesktopShortcut icon="player" text={'Total Video\nPlayer'} />
        </IconGrid>

        <Window $x={1047} $y={84} aria-label="Background folder">
          <WindowTop path="J" dim />
          <Body $row $h={148}>
            <PaneEdge />
            <VScroll>
              <Chevron dir="up" size={10} />
              <VThumb />
              <Chevron dir="down" size={10} />
            </VScroll>
          </Body>
          <WindowStatus text="172 items" />
        </Window>

        <Window $x={1021} $y={58} aria-label="Certificate folder">
          <WindowTop path="j." />
          <Body $h={150}>
            <ColumnHead as="label">
              <Check type="checkbox" />
              Name
            </ColumnHead>
            <ul>
              {files.map((f) => (
                <FileRow key={f.name} $selected={f.selected}>
                  <RowCheck type="checkbox" $show={f.selected} defaultChecked={f.selected} aria-label={f.name} />
                  {fileIcons[f.icon]}
                  <span>{f.name}</span>
                </FileRow>
              ))}
            </ul>
            <HScroll><Chevron size={9} /></HScroll>
          </Body>
          <WindowStatus text="3 items" />
        </Window>

        <Menu role="menu">
          {menu.map((m, i) => (m ? (
            <MenuItem key={m.label} role="menuitem" type="button" $active={m.active} $compact={m.compact}>
              <MenuIcon $end={m.icon === 'disc'}>{menuGlyphs[m.icon]}</MenuIcon>
              <AccessLabel text={m.label} />
              {m.more && <Chevron size={9} w={1} />}
            </MenuItem>
          ) : <MenuLine key={i} />))}
        </Menu>
      </Desktop>

      <Taskbar>
        <StartButton aria-label="Start" type="button">
          <svg width="17" height="17" viewBox="0 0 17 17">
            <path d="M0 2.500l7-1V8H0zM8 1.300L17 0v8H8zM0 9h7v6.500l-7-1zM8 9h9v8l-9-1.300z" fill="#fff" />
          </svg>
        </StartButton>
        <Search>
          <svg width="22" height="22" viewBox="0 0 22 22">
            <circle cx="11" cy="11" r="9.300" fill="none" stroke="#111" strokeWidth="2.600" />
          </svg>
          <SearchInput type="text" placeholder="Type here to search" aria-label="Search" />
          <svg width="12" height="18" viewBox="0 0 12 18">
            <rect x="3.500" y="1" width="5" height="10" rx="1" fill="none" stroke="#333" strokeWidth="1.200" />
            <path d="M1 8v3c0 2 1 3 3 3h4c2 0 3-1 3-3V8M6 14v3M3.500 16.500h5" fill="none" stroke="#333" strokeWidth="1.200" />
          </svg>
        </Search>
        <TaskButton aria-label="Task View" type="button">
          <svg width="18" height="18" viewBox="0 0 18 18" fill="none" stroke="#e8dfd5">
            <path d="M1.500 1v2.500h9V1M1.500 5.500h9v7h-9zM1.500 17v-2.500h9V17M15.500 1v16" />
            <path d="M14.500 6h2v3h-2z" fill="#e8dfd5" />
          </svg>
        </TaskButton>
        <TaskButton aria-label="Mail" type="button">
          <svg width="26" height="21" viewBox="0 0 26 21">
            <path d="M1 7L13 0l12 7v13H1z" fill="#fff" />
            <path d="M3 7.500h21l-6 3.500 2 4z" fill="#3a1f04" />
          </svg>
        </TaskButton>
        <TaskButton aria-label="Edge" type="button">
          <svg width="22" height="22" viewBox="0 0 24 24">
            <path d="M1 11C2 4 7 1 12.500 1 19 1 23 6 23 11.500V14H8.500c.3 4 3 5.500 6.500 5.500 2.500 0 5-.8 7-2v4.200C20 23 17.500 23.500 15 23.500 8 23.500 4 19.500 4 14c0-4 2-6.800 5.500-8.500C5.500 6 3 8 1 11zM9 10h8.500c0-2.500-1.500-4-4-4S9.300 7.500 9 10z" fill="#1b7ddb" />
          </svg>
        </TaskButton>
        <TaskButton aria-label="Store" type="button">
          <svg width="24" height="24" viewBox="0 0 24 24">
            <path d="M8 8V5c0-5 8-5 8 0v3" fill="none" stroke="#e6ded6" strokeWidth="1.500" />
            <path d="M0 7h24l-1 16H1z" fill="#fff" />
            <path d="M7 10h4.500v4.500H7z" fill="#e8502b" /><path d="M12.500 10H17v4.500h-4.500z" fill="#7eb82a" />
            <path d="M7 15.500h4.500V20H7z" fill="#2aa4e0" /><path d="M12.500 15.500H17V20h-4.500z" fill="#f6b817" />
          </svg>
        </TaskButton>
        <TaskButton $active aria-label="File Explorer" type="button">
          <svg width="22" height="19" viewBox="0 0 22 19">
            <path d="M1 1h8l2 2h10v4H1z" fill="#e5b43c" />
            <path d="M0 4h22v14H0z" fill="#fbe28e" />
            <path d="M4 18v-8h14v8h-4v-4H8v4z" fill="#37a8df" />
          </svg>
        </TaskButton>
        <TaskButton $open aria-label="OBS Studio" type="button">
          <svg width="24" height="24" viewBox="0 0 24 24"><ObsMark r={11} cx={12} cy={12} /></svg>
        </TaskButton>
        <Tray>
          <TrayButton $w={40} aria-label="People" type="button">
            <svg width="16" height="16" viewBox="0 0 16 16" fill="none" stroke="#f3ede6" strokeWidth="1.300">
              <circle cx="10.500" cy="3.500" r="2.700" /><circle cx="5" cy="8" r="2.500" />
              <path d="M1 15.500c0-6 8-6 8 0M9.500 8c3-2 5.500 0 5.500 4" />
            </svg>
          </TrayButton>
          <TrayButton $w={40} aria-label="Show hidden icons" type="button">
            <svg width="14" height="8" viewBox="0 0 14 8"><path d="M1 7l6-6 6 6" fill="none" stroke="#f3ede6" strokeWidth="1.200" /></svg>
          </TrayButton>
          <TrayButton $w={26} aria-label="Battery" type="button">
            <svg width="17" height="14" viewBox="0 0 17 14">
              <path d="M1 2h13v8H1z" fill="#fff" stroke="#d8d0c8" /><path d="M15 4h1v4h-1z" fill="#fff" />
              <circle cx="11.500" cy="9" r="4.500" fill="#16853a" />
              <path d="M11.500 12V9M9.800 6.500v1.700c0 1.800 3.400 1.800 3.400 0V6.500" stroke="#bff0c9" fill="none" />
            </svg>
          </TrayButton>
          <TrayButton $w={38} aria-label="Network" type="button">
            <svg width="14" height="14" viewBox="0 0 14 14" fill="none" stroke="#b9a996" strokeWidth="1.200">
              <path d="M1 13C1 6 6 1 13 1M4 13c0-5 4-9 9-9M7 13c0-3 3-6 6-6" /><circle cx="12" cy="12" r="1.200" fill="#fff" stroke="#fff" />
            </svg>
          </TrayButton>
          <TrayButton $w={32} aria-label="Touch keyboard" type="button">
            <svg width="23" height="14" viewBox="0 0 23 14" fill="none" stroke="#d3c8bc">
              <rect x=".5" y=".5" width="22" height="13" /><path d="M3 4h17M3 7h17" strokeDasharray="1.500 1" /><path d="M3 10.500h2M7 10.500h9M18 10.500h2" />
            </svg>
          </TrayButton>
          <TrayButton $w={46} type="button">ENG</TrayButton>
          <TrayButton $w={58} type="button"><time>7:09 PM<br />2/20/2020</time></TrayButton>
          <TrayButton $w={54} aria-label="Notifications" type="button">
            <svg width="17" height="17" viewBox="0 0 17 17">
              <path d="M0 1h16v12H8l-4 3v-3H0z" fill="#fff" />
              <path d="M3 4h10M3 7h8M3 10h5" stroke="#3a1f04" />
              <circle cx="12" cy="11" r="4" fill="#3a1f04" /><circle cx="12" cy="11" r="3" fill="none" stroke="#fff" />
              <path d="M10 13l4-4" stroke="#fff" />
            </svg>
          </TrayButton>
          <ShowDesktop aria-label="Show desktop" type="button" />
        </Tray>
      </Taskbar>
    </Screen>
  );
}
